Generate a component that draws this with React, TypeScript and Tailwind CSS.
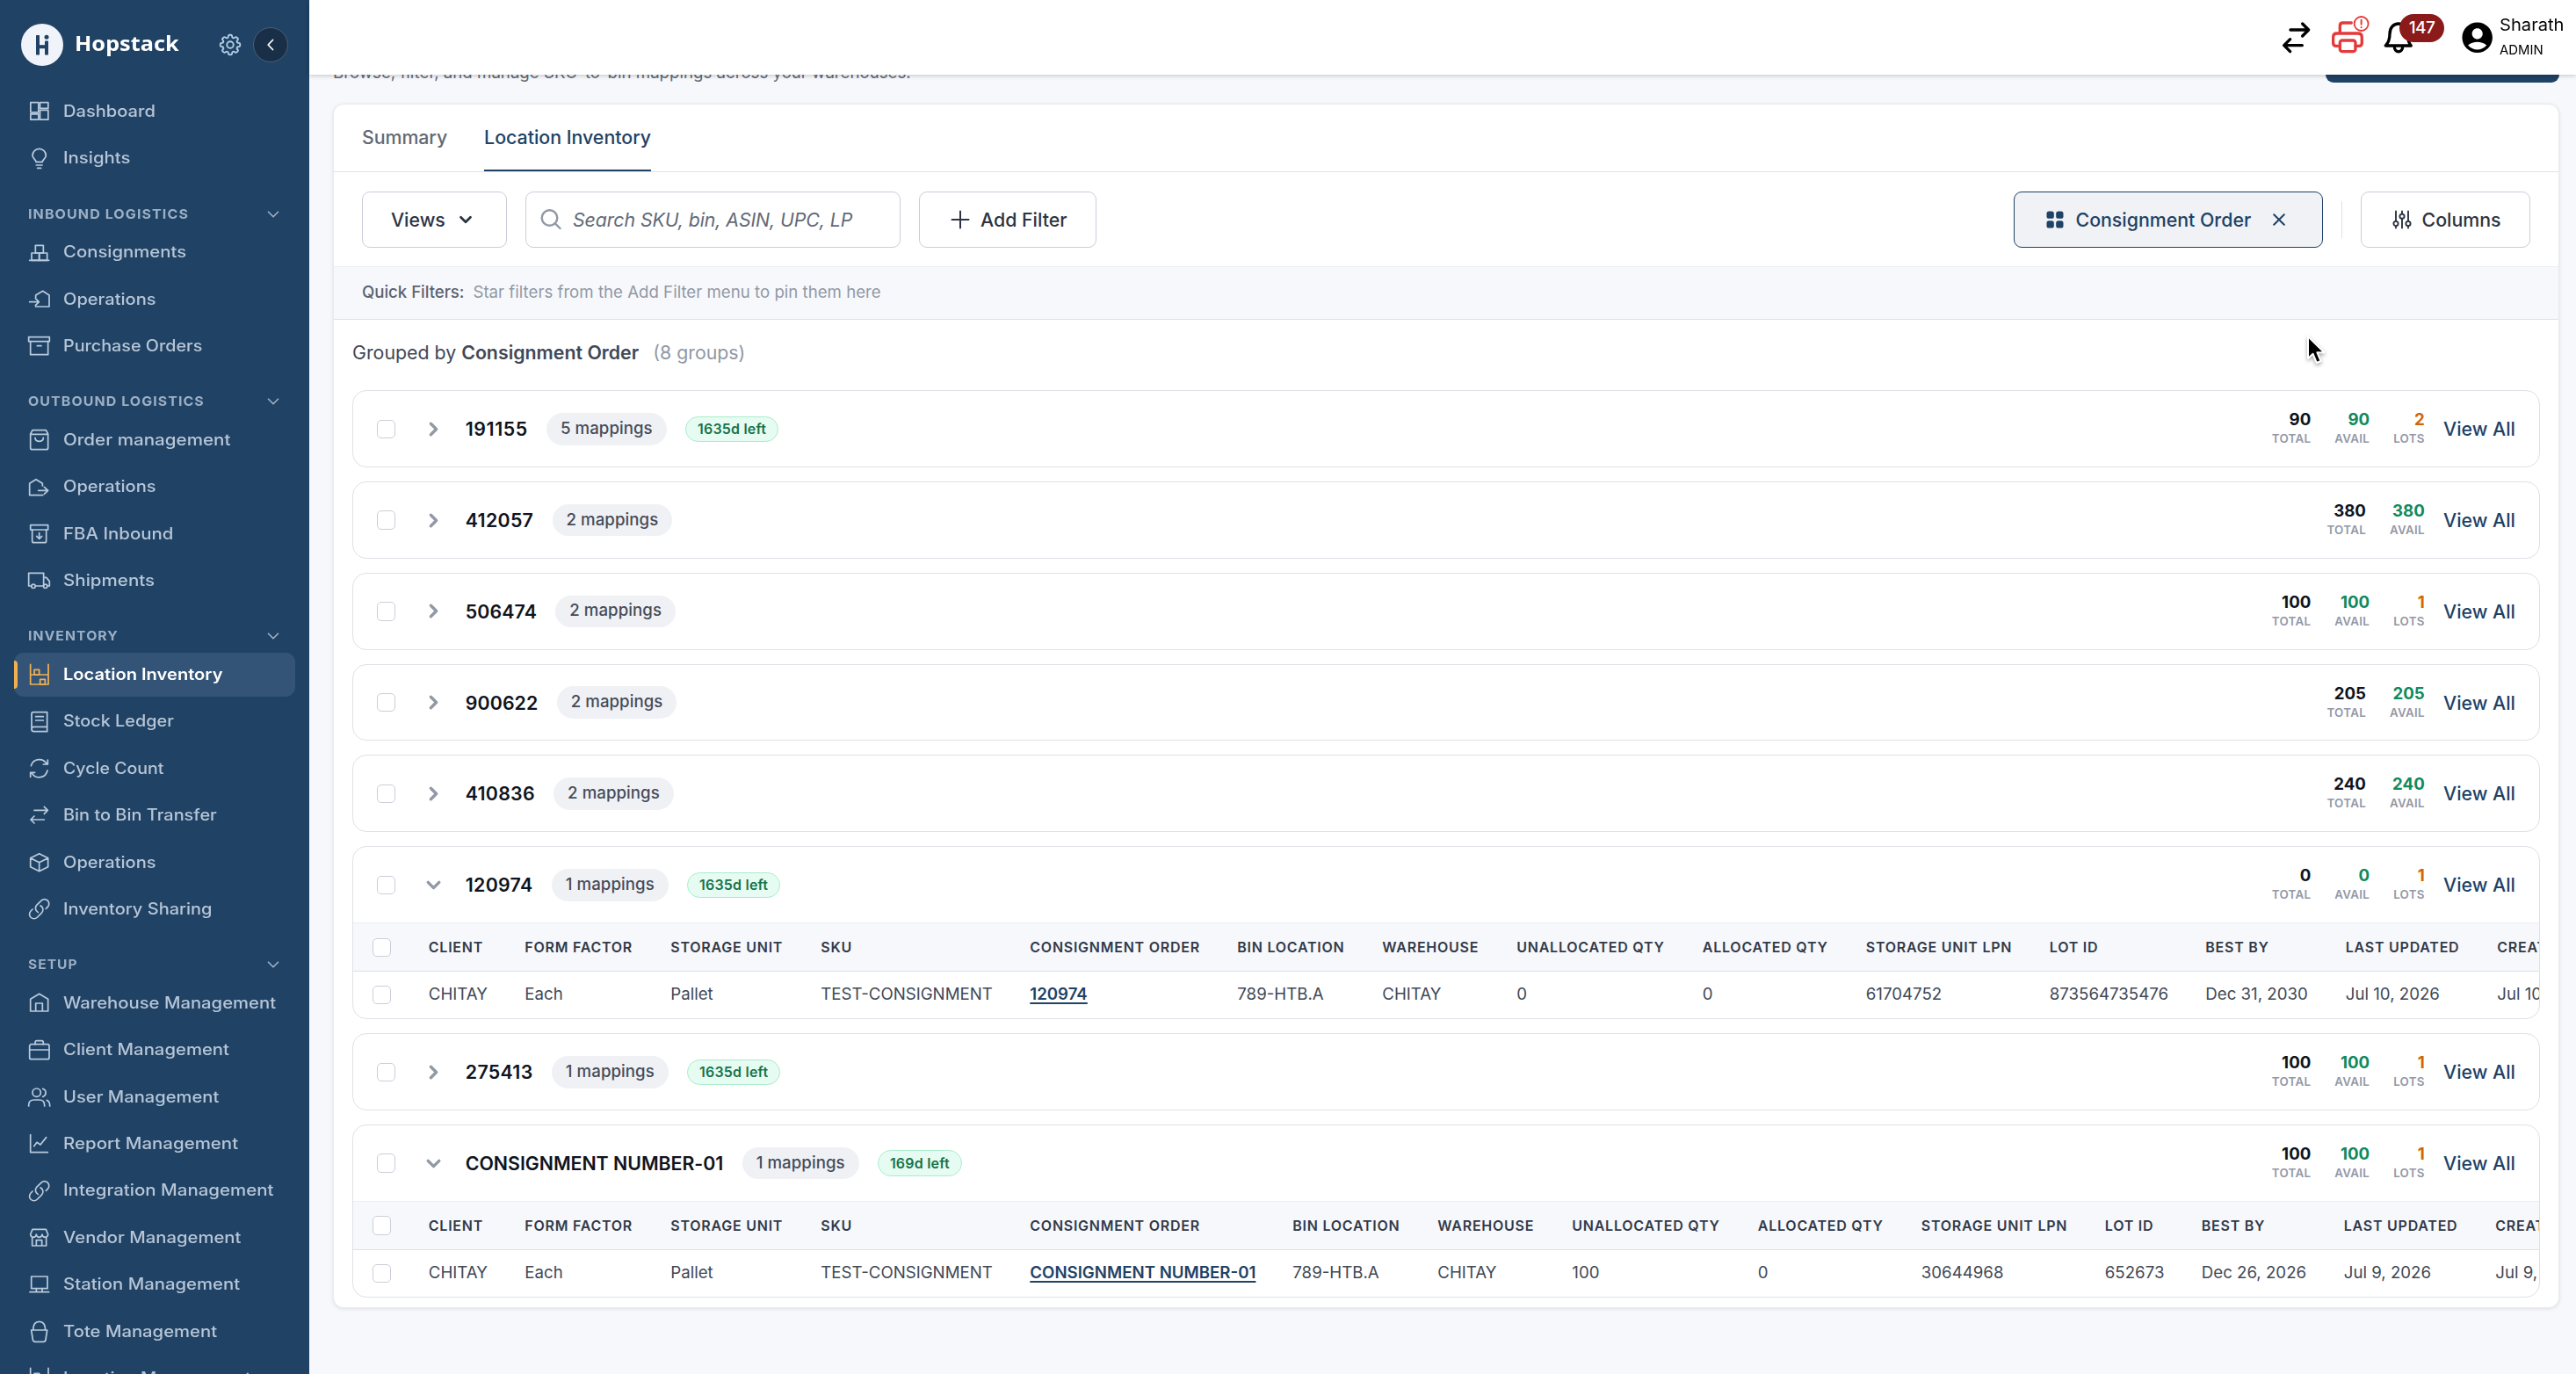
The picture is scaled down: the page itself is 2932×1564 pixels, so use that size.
import { useLayoutEffect, useRef, useState, type ReactNode } from "react";
import { MdAccountCircle } from "react-icons/md";
import { HiOutlineCog8Tooth } from "react-icons/hi2";

/* ---------- sidebar ---------- */

// Text stretched horizontally so that it fills a given width.
function FitText({ width, className, children }: { width: number; className: string; children: string }) {
  const ref = useRef<HTMLSpanElement>(null);
  const [scale, setScale] = useState(1);
  useLayoutEffect(() => {
    if (ref.current) setScale(width / ref.current.offsetWidth);
  }, [width]);
  return (
    <span
      ref={ref}
      className={"inline-block origin-left whitespace-nowrap " + className}
      style={{ transform: `scaleX(${scale})` }}
    >
      {children}
    </span>
  );
}

function NavIcon({ y, children }: { y: number; children: ReactNode }) {
  return (
    <svg
      viewBox={`93 ${y} 82 82`}
      className="h-[27.33px] w-[27.33px] shrink-0"
      fill="none"
      stroke="currentColor"
      strokeWidth="5.2"
      strokeLinejoin="round"
      strokeLinecap="round"
    >
      {children}
    </svg>
  );
}

const rack = (
  <NavIcon y={1004}>
    <path d="M104 1011V1079H165V1011M104 1046H165" />
    <rect x="117" y="1029" width="17" height="17" />
    <rect x="137" y="1062" width="17" height="17" />
  </NavIcon>
);

const link = (
  <svg viewBox="0 0 24 24" className="h-[27.33px] w-[27.33px] shrink-0" fill="none" stroke="currentColor" strokeWidth="1.5" strokeLinecap="round" strokeLinejoin="round">
    <path d="M13.19 8.688a4.5 4.5 0 0 1 1.242 7.244l-4.5 4.5a4.5 4.5 0 0 1-6.364-6.364l1.757-1.757m13.35-.622 1.757-1.757a4.5 4.5 0 0 0-6.364-6.364l-4.5 4.5a4.5 4.5 0 0 0 1.242 7.244" />
  </svg>
);

const icons: Record<string, ReactNode> = {
  dashboard: (
    <NavIcon y={339}>
      <rect x="104.500" y="350" width="27" height="33.500" />
      <rect x="136.500" y="350" width="28" height="20" />
      <rect x="104.500" y="389.500" width="27" height="19" />
      <rect x="136.500" y="376" width="28" height="32.500" />
    </NavIcon>
  ),
  bulb: (
    <NavIcon y={499}>
      <path d="M123 551c0-8-12-12-12-22a23 23 0 1 1 46 0c0 10-12 14-12 22zM124 562h20M128 572h12" />
    </NavIcon>
  ),
  boxes: (
    <NavIcon y={824}>
      <rect x="121" y="840" width="27" height="26" />
      <rect x="108" y="866" width="26" height="25" />
      <rect x="134" y="866" width="27" height="25" />
      <path d="M101 891H167" />
    </NavIcon>
  ),
  inbound: (
    <NavIcon y={984}>
      <path d="M122 1018V1011L146 997L168 1011V1050H122M101 1034H133M121 1022L133 1034L121 1046" />
    </NavIcon>
  ),
  archive: (
    <NavIcon y={1140}>
      <rect x="98" y="1151" width="71" height="15" />
      <path d="M104 1166V1211H164V1166M127 1181h14" />
    </NavIcon>
  ),
  bag: (
    <NavIcon y={204}>
      <path d="M111 212H157L164 225V272q0 6-6 6H110q-6 0-6-6V225ZM104 226H164M120 238q1 12 14 12q13 0 14-12" />
    </NavIcon>
  ),
  outbound: (
    <NavIcon y={364}>
      <path d="M145 400V392L123 378L101 392V432H146M131 416H164M151 404L164 416L151 428" />
    </NavIcon>
  ),
  fba: (
    <NavIcon y={522}>
      <rect x="104" y="533" width="60" height="16" />
      <path d="M110 549V587q0 6 6 6h36q6 0 6-6V549M134 560V580M125 571L134 580L143 571" />
    </NavIcon>
  ),
  truck: (
    <NavIcon y={679}>
      <path d="M106 739H98V695H149V739H122M149 710h9l11 13v16h-6" />
      <circle cx="114" cy="740" r="6.500" />
      <circle cx="155" cy="740" r="6.500" />
    </NavIcon>
  ),
  rack,
  ledger: (
    <NavIcon y={1164}>
      <path d="M161 1222V1172H114q-6 0-6 6V1230q0 8 8 8H161V1222H116q-8 0-8 8M122 1187h26M122 1200h26" />
    </NavIcon>
  ),
  cycle: (
    <NavIcon y={96}>
      <path d="M106 128a29 29 0 0 1 54-5M163 108v15h-15M162 144a29 29 0 0 1-54 8M104 166v-15h15" />
    </NavIcon>
  ),
  transfer: (
    <NavIcon y={255}>
      <path d="M117 280H163M151 268L163 280L151 292M151 312H105M117 300L105 312L117 324" />
    </NavIcon>
  ),
  cube: (
    <NavIcon y={415}>
      <path d="M134 426L164 441V471L134 486L104 471V441ZM104 441L134 456L164 441M134 456V486" />
    </NavIcon>
  ),
  link,
  warehouse: (
    <NavIcon y={899}>
      <path d="M104 968V927L134 909L164 927V968ZM122 968V941H145V968" />
    </NavIcon>
  ),
  briefcase: (
    <NavIcon y={7}>
      <rect x="101" y="30" width="67" height="51" rx="6" />
      <path d="M120 30V24q0-6 6-6h16q6 0 6 6v6M101 49H168" />
    </NavIcon>
  ),
  users: (
    <NavIcon y={167}>
      <circle cx="125" cy="193" r="14" />
      <path d="M98 239v-3q0-18 18-18h18q18 0 18 18v3M146 180a14 14 0 0 1 0 27M160 219q10 4 10 18v2" />
    </NavIcon>
  ),
  chart: (
    <NavIcon y={327}>
      <path d="M104 338V398H163M116 377L126 364L138 372L158 347" />
    </NavIcon>
  ),
  store: (
    <NavIcon y={649}>
      <path d="M104 679L111 662H157L164 679a10 10 0 0 1-20 0a10 10 0 0 1-20 0a10 10 0 0 1-20 0M110 690V718H158V690M124 718V699H143V718" />
    </NavIcon>
  ),
  station: (
    <NavIcon y={807}>
      <rect x="107" y="822" width="55" height="41" />
      <path d="M102 875H167M124 863V875M144 863V875" />
    </NavIcon>
  ),
  tote: (
    <NavIcon y={964}>
      <path d="M107 1000H161L156 1033q-1 7-8 7H120q-7 0-8-7ZM113 1000C113 980 122 971 134 971C146 971 155 980 155 1000" />
    </NavIcon>
  ),
};

type NavEntry = { heading: string; width: number } | { icon: string; label: string; width: number; active?: boolean };

const nav: NavEntry[] = [
  { icon: "dashboard", label: "Dashboard", width: 105 },
  { icon: "bulb", label: "Insights", width: 77 },
  { heading: "INBOUND LOGISTICS", width: 183 },
  { icon: "boxes", label: "Consignments", width: 140 },
  { icon: "inbound", label: "Operations", width: 106 },
  { icon: "archive", label: "Purchase Orders", width: 158 },
  { heading: "OUTBOUND LOGISTICS", width: 201 },
  { icon: "bag", label: "Order management", width: 190 },
  { icon: "outbound", label: "Operations", width: 106 },
  { icon: "fba", label: "FBA Inbound", width: 126 },
  { icon: "truck", label: "Shipments", width: 104 },
  { heading: "INVENTORY", width: 103 },
  { icon: "rack", label: "Location Inventory", width: 181, active: true },
  { icon: "ledger", label: "Stock Ledger", width: 125.5 },
  { icon: "cycle", label: "Cycle Count", width: 114 },
  { icon: "transfer", label: "Bin to Bin Transfer", width: 175 },
  { icon: "cube", label: "Operations", width: 106 },
  { icon: "link", label: "Inventory Sharing", width: 169 },
  { heading: "SETUP", width: 57 },
  { icon: "warehouse", label: "Warehouse Management", width: 242 },
  { icon: "briefcase", label: "Client Management", width: 189.5 },
  { icon: "users", label: "User Management", width: 177 },
  { icon: "chart", label: "Report Management", width: 199 },
  { icon: "link", label: "Integration Management", width: 240 },
  { icon: "store", label: "Vendor Management", width: 202.5 },
  { icon: "station", label: "Station Management", width: 201 },
  { icon: "tote", label: "Tote Management", width: 174.5 },
  { icon: "rack", label: "Location Management", width: 214 },
];

function Chevron({ className, stroke, right }: { className: string; stroke: number; right?: boolean }) {
  return (
    <svg viewBox="0 0 24 24" className={"shrink-0 " + className} fill="none" stroke="currentColor" strokeWidth={stroke} strokeLinecap="round" strokeLinejoin="round">
      <path d={right ? "m9 6 6 6-6 6" : "m6 9 6 6 6-6"} />
    </svg>
  );
}

function Sidebar() {
  return (
    <aside className="flex h-full w-[352px] shrink-0 flex-col overflow-hidden bg-[#1f4265]">
      <div className="flex h-[100.3px] shrink-0 items-center pt-[2px] pl-6">
        <div className="flex size-12 items-center justify-center rounded-full bg-[#f1f3fb]">
          <svg viewBox="0 0 16 24" className="h-6 w-4" fill="#1f4265">
            <rect x="1" y="1" width="4" height="22.500" rx="0.600" />
            <rect x="5" y="12.200" width="6" height="4" />
            <rect x="11" y="7.500" width="4" height="16" rx="0.600" />
            <circle cx="13" cy="3.200" r="2.500" />
          </svg>
        </div>
        <div className="ml-[12.500px] w-[162px] pb-[4px] font-['Noto_Sans',sans-serif]">
          <FitText width={119} className="text-2xl font-bold text-white">Hopstack</FitText>
        </div>
        <HiOutlineCog8Tooth className="size-[30px] shrink-0 text-[#b4cfe6]" />
        <div className="ml-[11.500px] flex size-10 items-center justify-center rounded-full border border-[#4b6076] bg-[#192f47] text-white">
          <svg viewBox="0 0 14 14" className="size-[14px]" fill="none" stroke="currentColor" strokeWidth="1.800" strokeLinecap="round" strokeLinejoin="round">
            <path d="M9.500 1.500 4.200 7l5.300 5.500" />
          </svg>
        </div>
      </div>
      <nav className="flex flex-col px-4">
        {nav.map((e, i) =>
          "heading" in e ? (
            <div key={i} className="flex h-[53.42px] shrink-0 items-center justify-between pt-[20px] pr-[14.500px] pl-4 text-[#9cafc5]">
              <FitText width={e.width} className="text-[15px] font-bold tracking-[1px]">{e.heading}</FitText>
              <Chevron className="size-[22px]" stroke={1.9} />
            </div>
          ) : (
            <div key={i} className="flex h-[53.42px] shrink-0 items-center">
              <div className={e.active ? "relative flex h-[50.7px] w-full items-center rounded-[11px] bg-[#335477] pl-[15px] text-[#f0b04f]" : "flex h-[50.7px] w-full items-center pl-[15px] text-[#b9cadd]"}>
                {e.active && <span className="absolute left-0 h-8 w-1 rounded-r-sm bg-[#f0b04f]" />}
                {icons[e.icon]}
                <div className="ml-[13.300px] pb-px">
                  <FitText width={e.width} className={e.active ? "text-[18px] font-semibold text-white" : "text-[18px] font-medium text-[#b7c5d6]"}>
                    {e.label}
                  </FitText>
                </div>
              </div>
            </div>
          ),
        )}
      </nav>
    </aside>
  );
}

/* ---------- top bar ---------- */

function TopBar() {
  return (
    <header className="relative z-10 flex h-[85px] shrink-0 items-center justify-end bg-white text-black shadow-[0_1px_5px_rgba(0,0,0,0.220)]">
      <svg viewBox="50 70 100 112" className="mr-[22px] h-[37.300px] w-[33.300px]" fill="none" stroke="currentColor" strokeWidth="10" strokeLinecap="round" strokeLinejoin="round">
        <path d="M80 100H142M121 79L142 100L121 121M120 153H58M79 132L58 153L79 174" />
      </svg>
      <svg viewBox="216 50 136 134" className="mr-4 mb-[6px] h-[44.700px] w-[45.300px] text-[#e53a3a]" fill="none" stroke="currentColor" strokeWidth="10" strokeLinecap="round" strokeLinejoin="round">
        <path d="M249 156h-12q-10 0-10-10v-20q0-13 13-13h72q13 0 13 13v20q0 10-10 10h-12" />
        <path d="M250 108V87q0-10 10-10h29" />
        <rect x="250" y="137" width="53" height="38" rx="8" />
        <circle cx="323" cy="80" r="24" strokeWidth="5.500" />
        <path d="M323 67V82M323 92v.5" strokeWidth="6" />
      </svg>
      <div className="relative mr-[52px]">
        <svg viewBox="400 70 100 112" className="h-[37.300px] w-[33.300px]" fill="none" stroke="currentColor" strokeWidth="10" strokeLinecap="round" strokeLinejoin="round">
          <path d="M407 154H494C484 142 482 132 482 114C482 92 468 79 451 79C434 79 421 92 421 114C421 132 418 142 407 154Z" />
          <path d="M437 158c0 22 28 22 28 0" />
        </svg>
        <span className="absolute -top-[7.500px] left-[17.700px] flex h-8 w-[51px] items-center justify-center rounded-full bg-[#8b1a1a] pb-px text-[19px] font-medium tracking-[-0.600px] text-white">
          147
        </span>
      </div>
      <MdAccountCircle className="mr-[5px] size-[41.400px]" />
      <div className="flex w-[87px] flex-col leading-[27.700px]">
        <FitText width={74} className="w-fit text-[18.500px]">Sharath</FitText>
        <FitText width={50} className="w-fit text-[14px]">ADMIN</FitText>
      </div>
    </header>
  );
}

/* ---------- groups ---------- */

type Column = { label: string; value: string; width: string; isLink?: boolean };
type Group = { id: string; tracking: string; mappings: number; left?: string; total: number; lots?: number; columns?: Column[] };

const groups: Group[] = [
  { id: "191155", tracking: "tracking-[0.550px]", mappings: 5, left: "1635d left", total: 90, lots: 2 },
  { id: "412057", tracking: "tracking-[0.300px]", mappings: 2, total: 380 },
  { id: "506474", tracking: "tracking-[0.100px]", mappings: 2, total: 100, lots: 1 },
  { id: "900622", tracking: "tracking-[0.100px]", mappings: 2, total: 205 },
  { id: "410836", tracking: "tracking-[0.250px]", mappings: 2, total: 240 },
  {
    id: "120974",
    tracking: "tracking-[0.300px]",
    mappings: 1,
    left: "1635d left",
    total: 0,
    lots: 1,
    columns: [
      { label: "CLIENT", value: "CHITAY", width: "w-[109.500px]" },
      { label: "FORM FACTOR", value: "Each", width: "w-[166px]" },
      { label: "STORAGE UNIT", value: "Pallet", width: "w-[171px]" },
      { label: "SKU", value: "TEST-CONSIGNMENT", width: "w-[238px]" },
      { label: "CONSIGNMENT ORDER", value: "120974", width: "w-[236px]", isLink: true },
      { label: "BIN LOCATION", value: "789-HTB.A", width: "w-[165px]" },
      { label: "WAREHOUSE", value: "CHITAY", width: "w-[153px]" },
      { label: "UNALLOCATED QTY", value: "0", width: "w-[211.500px]" },
      { label: "ALLOCATED QTY", value: "0", width: "w-[186px]" },
      { label: "STORAGE UNIT LPN", value: "61704752", width: "w-[209px]" },
      { label: "LOT ID", value: "873564735476", width: "w-[177.500px]" },
      { label: "BEST BY", value: "Dec 31, 2030", width: "w-[159.500px]" },
      { label: "LAST UPDATED", value: "Jul 10, 2026", width: "w-[172.500px]" },
      { label: "CREATED", value: "Jul 10, 2026", width: "w-[172px]" },
    ],
  },
  { id: "275413", tracking: "tracking-[0.300px]", mappings: 1, left: "1635d left", total: 100, lots: 1 },
  {
    id: "CONSIGNMENT NUMBER-01",
    tracking: "tracking-[-0.020px]",
    mappings: 1,
    left: "169d left",
    total: 100,
    lots: 1,
    columns: [
      { label: "CLIENT", value: "CHITAY", width: "w-[109.500px]" },
      { label: "FORM FACTOR", value: "Each", width: "w-[166px]" },
      { label: "STORAGE UNIT", value: "Pallet", width: "w-[171px]" },
      { label: "SKU", value: "TEST-CONSIGNMENT", width: "w-[238px]" },
      { label: "CONSIGNMENT ORDER", value: "CONSIGNMENT NUMBER-01", width: "w-[299px]", isLink: true },
      { label: "BIN LOCATION", value: "789-HTB.A", width: "w-[165px]" },
      { label: "WAREHOUSE", value: "CHITAY", width: "w-[153px]" },
      { label: "UNALLOCATED QTY", value: "100", width: "w-[211.500px]" },
      { label: "ALLOCATED QTY", value: "0", width: "w-[186px]" },
      { label: "STORAGE UNIT LPN", value: "30644968", width: "w-[209px]" },
      { label: "LOT ID", value: "652673", width: "w-[110px]" },
      { label: "BEST BY", value: "Dec 26, 2026", width: "w-[162px]" },
      { label: "LAST UPDATED", value: "Jul 9, 2026", width: "w-[172.500px]" },
      { label: "CREATED", value: "Jul 9, 2026", width: "w-[172px]" },
    ],
  },
];

function Checkbox() {
  return <span className="size-[21.300px] shrink-0 rounded-[5px] border border-[#cbced9] bg-white" />;
}

function Stat({ value, label, color }: { value: number; label: string; color: string }) {
  return (
    <div className="flex flex-col items-end">
      <span className={"text-[18.670px] leading-[22px] font-bold " + color}>{value}</span>
      <span className="text-[13.330px] leading-[20px] font-semibold tracking-[0.300px] text-[#9298a6]">{label}</span>
    </div>
  );
}

function GroupCard({ g }: { g: Group }) {
  return (
    <section className={(g.columns ? "h-[197px]" : "h-[87.800px]") + " shrink-0 overflow-hidden rounded-2xl border border-[#dfe1e7] bg-white"}>
      <div className="flex h-[86px] items-center px-[27px]">
        <Checkbox />
        <div className="mr-[20.500px] ml-[27px] flex w-8 justify-center text-[#9299a5]">
          <Chevron className="size-[25px]" stroke={3.3} right={!g.columns} />
        </div>
        <span className={"pt-[2px] text-[21.330px] font-semibold text-[#0f1420] " + g.tracking}>{g.id}</span>
        <span className="ml-[21.300px] flex h-[36.700px] items-center rounded-full bg-[#f0f1f5] px-4 pb-px text-[18.670px] font-medium tracking-[0.050px] text-[#454c59]">
          {g.mappings} mappings
        </span>
        {g.left && (
          <span className="ml-[21.300px] flex h-[29.300px] items-center rounded-full border border-[#a9ecca] bg-[#e6fcf3] px-[13px] text-base font-semibold tracking-[0.200px] text-[#15734a]">
            {g.left}
          </span>
        )}
        <div className="ml-auto flex gap-[27px]">
          <Stat value={g.total} label="TOTAL" color="text-[#0f1420]" />
          <Stat value={g.total} label="AVAIL" color="text-[#108a5e]" />
          {g.lots !== undefined && <Stat value={g.lots} label="LOTS" color="text-[#d0660c]" />}
        </div>
        <span className="ml-[21.300px] pt-[2px] text-[21.330px] font-medium text-[#1f4265]">View All</span>
      </div>
      {g.columns && (
        <div className="border-t border-[#eceef2]">
          <div className="flex h-[55px] items-center border-b border-[#dfe1e7] bg-[#f7f8fc] pl-[22px]">
            <Checkbox />
            <div className="ml-[42.500px] flex shrink-0 pb-px text-base font-semibold tracking-[0.750px] whitespace-nowrap text-[#323a49]">
              {g.columns.map((c) => (
                <span key={c.label} className={"shrink-0 " + c.width}>{c.label}</span>
              ))}
            </div>
          </div>
          <div className="flex h-[53px] items-center pl-[22px]">
            <Checkbox />
            <div className="ml-[42.500px] flex shrink-0 pb-px text-[18.670px] whitespace-nowrap text-[#414855]">
              {g.columns.map((c) => (
                <span key={c.label} className={"shrink-0 " + c.width}>
                  {c.isLink ? (
                    <a className="font-semibold text-[#1f4265] underline decoration-[1.500px] underline-offset-[3px]">{c.value}</a>
                  ) : (
                    c.value
                  )}
                </span>
              ))}
            </div>
          </div>
        </div>
      )}
    </section>
  );
}

/* ---------- page ---------- */

function Toolbar() {
  return (
    <div className="flex h-[107px] px-8 pt-[22px] text-[21.330px] font-medium text-[#2c3442]">
      <button className="flex h-16 w-[165px] items-center rounded-[9px] border border-[#cbced9] pl-8">
        <span className="pt-[2px]">Views</span>
        <Chevron className="ml-[12px] size-[22px]" stroke={3} />
      </button>
      <div className="ml-[21px] flex h-16 w-[427px] items-center rounded-[9px] border border-[#cbced9] pl-[14px] font-normal tracking-[-0.090px] text-[#626976] italic">
        <svg viewBox="0 0 28 28" className="mr-[11px] size-7 text-[#9198a5]" fill="none" stroke="currentColor" strokeWidth="2.400" strokeLinecap="round">
          <circle cx="12.500" cy="12" r="8.800" />
          <path d="M19 18.500 24.500 24" />
        </svg>
        <span className="pt-[2px]">Search SKU, bin, ASIN, UPC, LP</span>
      </div>
      <button className="ml-[21px] flex h-16 w-[202px] items-center rounded-[9px] border border-[#cbced9] pl-[35px]">
        <svg viewBox="0 0 22 22" className="mr-[12px] size-[22px]" stroke="currentColor" strokeWidth="2" strokeLinecap="round">
          <path d="M11 1.500v19M1.500 11h19" />
        </svg>
        <span className="pt-[2px]">Add Filter</span>
      </button>
      <button className="ml-auto flex h-16 w-[352px] items-center rounded-[9px] border border-[#1f4265] bg-[#f0f2f6] pl-9 text-[#1f4265]">
        <svg viewBox="0 0 20 20" className="mr-[13.500px] size-5" fill="currentColor">
          <rect x="0.500" y="0.500" width="8.300" height="8.300" rx="2.600" />
          <rect x="11.200" y="0.500" width="8.300" height="8.300" rx="2.600" />
          <rect x="0.500" y="11.200" width="8.300" height="8.300" rx="2.600" />
          <rect x="11.200" y="11.200" width="8.300" height="8.300" rx="2.600" />
        </svg>
        <span className="pt-[2px]">Consignment Order</span>
        <svg viewBox="0 0 14 14" className="ml-[25px] size-[14px]" stroke="currentColor" strokeWidth="2" strokeLinecap="round">
          <path d="M1.200 1.200 12.800 12.800M12.800 1.200 1.200 12.800" />
        </svg>
      </button>
      <span className="mt-[10.500px] ml-[21px] h-[42.700px] w-px bg-[#dfe1e7]" />
      <button className="ml-[21px] flex h-16 w-[193px] items-center rounded-[9px] border border-[#cbced9] pl-[34.500px]">
        <svg viewBox="0 0 22 22" className="mr-[12px] size-[22px]" fill="none" stroke="currentColor" strokeWidth="1.900" strokeLinecap="round">
          <path d="M4 1.500V12.500M4 18.500V20.500M11 1.500V4.500M11 10V20.500M18 1.500V12.500M18 18.500V20.500" />
          <circle cx="4" cy="15.500" r="2.600" />
          <circle cx="11" cy="7.200" r="2.600" />
          <circle cx="18" cy="15.500" r="2.600" />
        </svg>
        <span className="pt-[2px]">Columns</span>
      </button>
    </div>
  );
}

export default function App() {
  return (
    <div className="flex h-[1564px] w-[2932px] overflow-hidden bg-[#f7f8fc] font-['Inter',sans-serif]">
      <Sidebar />
      <div className="flex min-w-0 flex-1 flex-col">
        <TopBar />
        <main className="-mt-[33px] flex flex-col pr-[19px] pl-[27px]">
          <div className="flex h-[42px] justify-between">
            <p className="pt-[17px] text-[18.670px] leading-7 text-[#626976]">
              Browse, filter, and manage SKU-to-bin mappings across your warehouses.
            </p>
            <button className="h-full w-[266px] rounded-[9px] bg-[#1f4265]" />
          </div>
          <div className="mt-6 flex h-[1371px] flex-col rounded-xl border border-[#e8eaee] bg-white shadow-[0_1px_4px_rgba(0,0,0,0.100)]">
            <div className="flex h-[77px] shrink-0 gap-[42px] border-b border-[#dfe1e7] px-8 text-[21.330px] font-medium">
              <span className="flex items-center text-[#626976] tracking-[-0.050px]">Summary</span>
              <span className="flex items-center border-b-2 border-[#1f4265] pt-[2px] text-[#1f4265]">Location Inventory</span>
            </div>
            <Toolbar />
            <div className="flex h-[61px] shrink-0 items-center gap-[10px] border-y border-t-[#eceef2] border-b-[#dfe1e7] bg-[#f7f8fc] px-8 pb-px text-[18.670px]">
              <span className="font-medium tracking-[-0.050px] text-[#5c6370]">Quick Filters:</span>
              <span className="text-[#9198a5]">Star filters from the Add Filter menu to pin them here</span>
            </div>
            <div className="flex h-[80.300px] shrink-0 items-center px-[21px] pb-[4px] text-[21.330px] text-[#414855]">
              <span>
                Grouped by <b className="font-semibold">Consignment Order</b>
              </span>
              <span className="ml-[16px] text-[#9198a5]">(8 groups)</span>
            </div>
            <div className="flex flex-col gap-4 px-[21px]">
              {groups.map((g) => (
                <GroupCard key={g.id} g={g} />
              ))}
            </div>
          </div>
        </main>
      </div>
      <svg viewBox="0 0 26 36" className="absolute top-[380px] left-[2624px] h-9 w-[26px] drop-shadow-[0_2px_2px_rgba(0,0,0,0.350)]">
        <path d="M3 3V28L8.600 22.800L12.800 33L17.600 31L13.400 21.200H21.500Z" fill="#000" stroke="#fff" strokeWidth="2" strokeLinejoin="round" />
      </svg>
    </div>
  );
}
